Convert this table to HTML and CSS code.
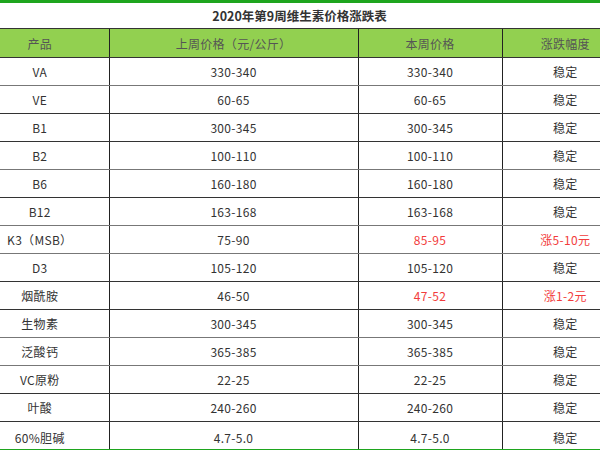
FILE: index.html
```html
<!DOCTYPE html>
<html lang="zh">
<head>
<meta charset="utf-8">
<link rel="stylesheet" href="styles.css">
</head>
<body>
<div class="sheet">
  <div class="title">2020年第9周维生素价格涨跌表</div>
  <table class="grid">
    <colgroup>
      <col class="c1"><col class="c2"><col class="c3"><col class="c4">
    </colgroup>
    <thead>
      <tr><th>产品</th><th>上周价格（元/公斤）</th><th>本周价格</th><th>涨跌幅度</th></tr>
    </thead>
    <tbody>
      <tr class="lt"><td>VA</td><td>330-340</td><td>330-340</td><td>稳定</td></tr>
      <tr><td>VE</td><td>60-65</td><td>60-65</td><td>稳定</td></tr>
      <tr><td>B1</td><td>300-345</td><td>300-345</td><td>稳定</td></tr>
      <tr class="lt"><td>B2</td><td>100-110</td><td>100-110</td><td>稳定</td></tr>
      <tr><td>B6</td><td>160-180</td><td>160-180</td><td>稳定</td></tr>
      <tr class="lt"><td>B12</td><td>163-168</td><td>163-168</td><td>稳定</td></tr>
      <tr class="lt"><td>K3（MSB）</td><td>75-90</td><td class="up">85-95</td><td class="up">涨5-10元</td></tr>
      <tr><td>D3</td><td>105-120</td><td>105-120</td><td>稳定</td></tr>
      <tr><td>烟酰胺</td><td>46-50</td><td class="up">47-52</td><td class="up">涨1-2元</td></tr>
      <tr class="lt"><td>生物素</td><td>300-345</td><td>300-345</td><td>稳定</td></tr>
      <tr class="lt"><td>泛酸钙</td><td>365-385</td><td>365-385</td><td>稳定</td></tr>
      <tr><td>VC原粉</td><td>22-25</td><td>22-25</td><td>稳定</td></tr>
      <tr><td>叶酸</td><td>240-260</td><td>240-260</td><td>稳定</td></tr>
      <tr class="last"><td>60%胆碱</td><td>4.7-5.0</td><td>4.7-5.0</td><td>稳定</td></tr>
    </tbody>
  </table>
</div>
</body>
</html>
```

FILE: styles.css
```css
html, body {
  margin: 0;
  padding: 0;
  background: #fff;
  overflow: hidden;
}
body {
  width: 600px;
  height: 450px;
  font-family: "Noto Sans CJK SC", "Noto Sans", sans-serif;
  font-size: 12px;
  color: #333;
}
.sheet {
  width: 657px;
  margin-left: -29px;
  border-top: 3px solid #1ea51e;
}
.title {
  height: 25px;
  line-height: 25px;
  text-align: center;
  font-weight: bold;
  font-size: 12.5px;
  color: #333;
  border-bottom: 1px solid #333;
}
.grid {
  width: 657px;
  border-collapse: collapse;
  table-layout: fixed;
  border-bottom: 3px solid #1ea51e;
}
.c1 { width: 138px; }
.c2 { width: 249px; }
.c3 { width: 144px; }
.c4 { width: 126px; }
.grid th, .grid td {
  padding: 0;
  text-align: center;
  vertical-align: middle;
  border-left: 1px solid #222;
  border-bottom: 1px solid #333;
  letter-spacing: 0.3px;
}
.grid th:first-child, .grid td:first-child { border-left: none; }
.grid th {
  height: 28px;
  background: #92d050;
  font-weight: normal;
  color: #555;
}
.grid td { height: 27px; }
.grid tr.lt td { border-bottom-color: #777; }
.grid tr.last td { height: 24px; border-bottom: none; padding-top: 3px; }
.grid td.up { color: #f23c3c; }
```
